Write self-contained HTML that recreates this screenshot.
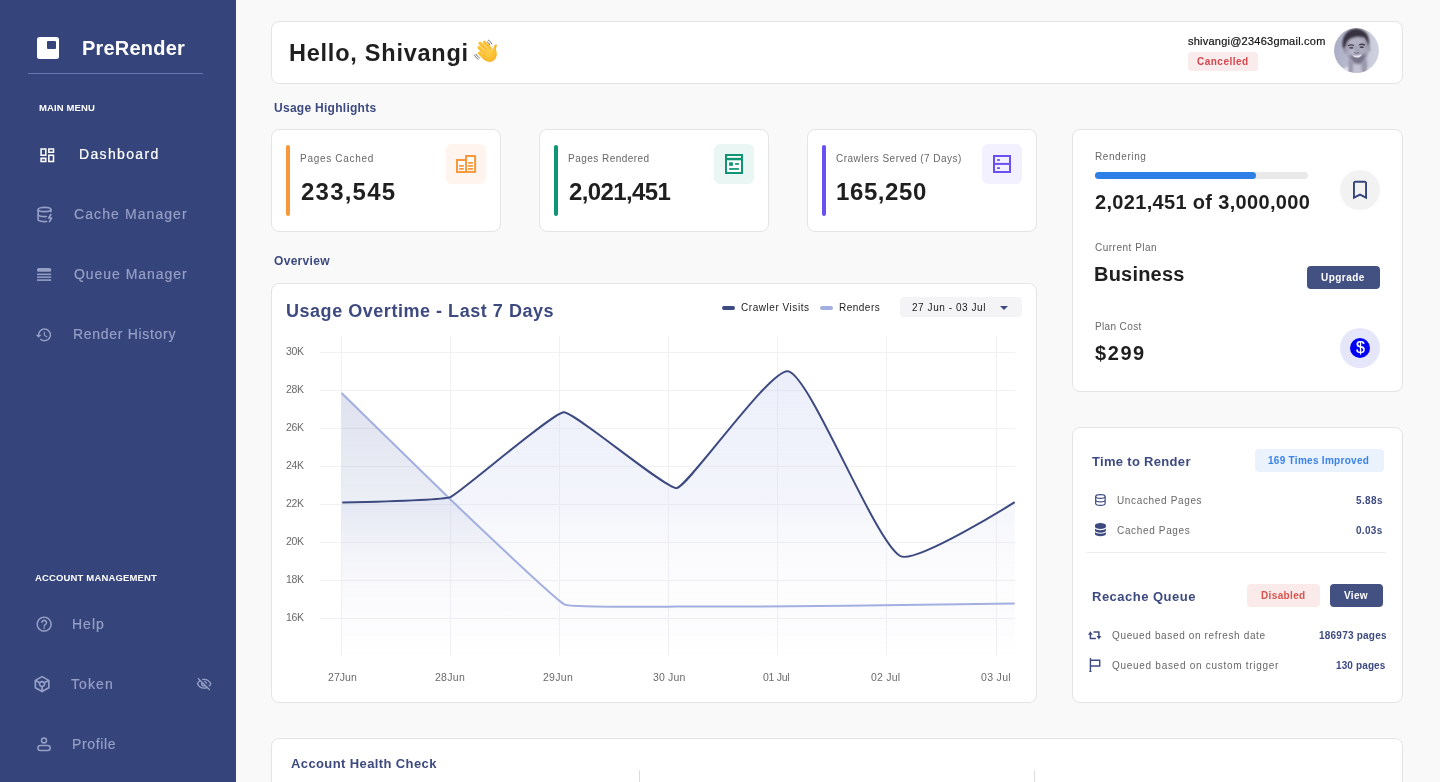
<!DOCTYPE html>
<html lang="en"><head><meta charset="utf-8"><title>PreRender Dashboard</title>
<style>
*{box-sizing:border-box;margin:0;padding:0}
html,body{width:1440px;height:782px;overflow:hidden}
body{position:relative;background:#f9f9f9;font-family:"Liberation Sans",sans-serif}
.t{position:absolute;white-space:pre;will-change:transform}
.abs{position:absolute}
.sidebar{position:absolute;left:0;top:0;width:236px;height:782px;background:#35447a}
.card{position:absolute;background:#fff;border:1px solid #e4e4e4;border-radius:8px}
svg{position:absolute;overflow:visible}

</style></head>
<body>
<!-- ============ SIDEBAR ============ -->
<div class="sidebar"></div>
<div class="abs" style="left:37px;top:37px;width:22px;height:22px;background:#fff;border-radius:2.5px"></div>
<div class="abs" style="left:47px;top:40.5px;width:9px;height:8.5px;background:#35447a;border-radius:1px"></div>
<div class="abs" style="left:28px;top:73px;width:175px;height:1px;background:#6576b4"></div>

<!-- dashboard icon -->
<svg style="left:37.600px;top:145.800px" width="18.600" height="18.600" viewBox="0 0 24 24" fill="#fff"><path d="M19 5v2h-4V5h4M9 5v6H5V5h4m10 8v6h-4v-6h4M9 17v2H5v-2h4M21 3h-8v6h8V3zM11 3H3v10h8V3zm10 8h-8v10h8V11zm-10 4H3v6h8v-6z"/></svg>
<!-- cache manager icon (database + bolt) -->
<svg style="left:35.600px;top:206.300px" width="17" height="17" viewBox="0 0 24 24" fill="none" stroke="#969fc5" stroke-width="2.300" stroke-linecap="round" stroke-linejoin="round"><ellipse cx="12" cy="5" rx="9" ry="3"/><path d="M3 5V19A9 3 0 0 0 15 21.84"/><path d="M21 5V8"/><path d="M21 12L18 17H22L19 22"/><path d="M3 12A9 3 0 0 0 14.59 14.87"/></svg>
<!-- queue manager icon -->
<svg style="left:37px;top:268px" width="14.2" height="13.2" viewBox="0 0 14.2 13.2" fill="#969fc5"><rect x="0" y="0" width="14.2" height="3.8" rx="1.6"/><rect x="0" y="5.6" width="14.2" height="1.5"/><rect x="0" y="8.4" width="14.2" height="1.5"/><rect x="0" y="11.3" width="14.2" height="1.6"/></svg>
<!-- render history icon -->
<svg style="left:35.4px;top:325.6px" width="17.6" height="17.6" viewBox="0 0 24 24" fill="#969fc5"><path d="M13 3c-4.97 0-9 4.03-9 9H1l3.89 3.89.07.14L9 12H6c0-3.87 3.13-7 7-7s7 3.130 7 7-3.13 7-7 7c-1.93 0-3.68-.79-4.94-2.06l-1.42 1.42C8.27 19.99 10.51 21 13 21c4.97 0 9-4.03 9-9s-4.03-9-9-9zm-1 5v5l4.280 2.540.72-1.210-3.500-2.080V8H12z"/></svg>
<!-- help icon -->
<svg style="left:34.9px;top:615.2px" width="18.4" height="18.4" viewBox="0 0 24 24" fill="#969fc5"><path d="M11 18h2v-2h-2v2zm1-16C6.48 2 2 6.48 2 12s4.48 10 10 10 10-4.48 10-10S17.52 2 12 2zm0 18c-4.41 0-8-3.590-8-8s3.590-8 8-8 8 3.590 8 8-3.590 8-8 8zm0-14c-2.210 0-4 1.790-4 4h2c0-1.100.9-2 2-2s2 .9 2 2c0 2-3 1.750-3 5h2c0-2.250 3-2.500 3-5 0-2.210-1.790-4-4-4z"/></svg>
<!-- token icon -->
<svg style="left:32.4px;top:674.3px" width="20.2" height="20.2" viewBox="0 0 24 24" fill="#969fc5"><path d="M21 7l-9-5-9 5v10l9 5 9-5V7zm-9-2.710l5.910 3.280-3.010 1.670C14.170 8.480 13.140 8 12 8s-2.170.48-2.900 1.240L6.090 7.570 12 4.290zM11 19.160l-6-3.330V9.260l3.130 1.740c-.09.31-.13.65-.13 1 0 1.860 1.270 3.430 3 3.870v3.290zM10 12c0-1.100.9-2 2-2s2 .9 2 2-.9 2-2 2-2-.9-2-2zm3 7.160v-3.280c1.730-.44 3-2.010 3-3.870 0-.35-.04-.69-.13-1.010L19 9.260v6.570l-6 3.330z"/></svg>
<!-- eye off -->
<svg style="left:196.3px;top:675.6px" width="16.2" height="16.2" viewBox="0 0 24 24" fill="#969fc5"><path d="M12 6c3.790 0 7.170 2.130 8.820 5.500-.59 1.220-1.420 2.270-2.410 3.120l1.410 1.410c1.390-1.230 2.490-2.770 3.180-4.530C21.270 7.110 17 4 12 4c-1.270 0-2.490.2-3.640.57l1.650 1.650C10.660 6.090 11.320 6 12 6zm-1.070 1.140L13 9.210c.57.25 1.030.71 1.280 1.280l2.070 2.070c.08-.34.14-.7.140-1.070C16.500 9.010 14.480 7 12 7c-.37 0-.72.05-1.070.14zM2.010 3.870l2.680 2.680C3.060 7.830 1.770 9.530 1 11.500 2.730 15.890 7 19 12 19c1.520 0 2.980-.29 4.320-.82l3.420 3.420 1.410-1.410L3.420 2.450 2.010 3.870zm7.500 7.500l2.610 2.610c-.4.010-.8.020-.12.020-1.380 0-2.500-1.120-2.500-2.500 0-.5.010-.8.010-.13zm-3.400-3.400l1.750 1.750c-.23.55-.36 1.150-.36 1.780 0 2.480 2.020 4.500 4.500 4.500.63 0 1.230-.13 1.770-.36l.98.98c-.88.24-1.800.38-2.750.38-3.790 0-7.170-2.130-8.820-5.500.7-1.430 1.720-2.610 2.930-3.530z"/></svg>
<!-- profile icon -->
<svg style="left:36px;top:736px" width="16" height="16" viewBox="0 0 16 16" fill="none" stroke="#969fc5" stroke-width="1.500"><circle cx="8" cy="4.400" r="2.500"/><rect x="1.900" y="9.400" width="12.300" height="5.100" rx="2.550"/></svg>

<!-- ============ HEADER CARD ============ -->
<div class="card" style="left:271px;top:21px;width:1132px;height:63px"></div>
<!-- waving hand -->
<svg style="left:474px;top:38.500px" width="24" height="24" viewBox="0 0 24 24">
  <defs><radialGradient id="hg" cx="0.42" cy="0.40" r="0.75"><stop offset="0" stop-color="#fdd14d"/><stop offset="0.65" stop-color="#fbbd2e"/><stop offset="1" stop-color="#ef9f1e"/></radialGradient></defs>
  <g stroke="#fbc133" stroke-width="3.200" stroke-linecap="round" fill="none">
    <path d="M10.300 3.300L16.600 9.600"/><path d="M6 4.300L13.400 11.700"/><path d="M5 8.700L11.400 15.100"/><path d="M5.400 14.100L10.400 19.100"/>
  </g>
  <path d="M17.700 11.600C18.900 10.200 19.300 8.600 20 7.100C20.800 5.600 22.300 5.100 22.800 5.900C23.200 6.600 22.300 7.700 22 9.300C21.700 11.100 22.800 12.600 22.800 15C22.800 19.400 19.700 22.900 15.600 22.900C12.400 22.900 10.400 21.100 8.400 19.100L9.500 13L15.600 8.400Z" fill="url(#hg)"/>
  <g stroke="#f5ae27" stroke-width="0.500" fill="none" opacity="0.8"><path d="M8.400 4.300L14.900 10.800"/><path d="M6 6.900L12.500 13.400"/><path d="M5.600 11.700L10.900 17"/></g>
  <g stroke="#4f4f4f" stroke-width="0.900" fill="none" stroke-linecap="round" opacity="0.85">
    <path d="M14.300 1q2.600 1.300 3.500 3.900"/><path d="M13.200 2.700q2 1 2.600 3.100"/>
    <path d="M0.400 16q1.100 2.800 3.700 4.300"/><path d="M2 15.200q1 2.300 3.400 3.700"/>
  </g>
</svg>
<!-- cancelled badge -->
<div class="abs" style="left:1188px;top:52px;width:69.5px;height:19px;background:#faebec;border-radius:3.5px"></div>
<!-- avatar -->
<svg style="left:1334px;top:28.200px" width="45" height="45" viewBox="0 0 45 45">
  <defs><clipPath id="avc"><circle cx="22.500" cy="22.500" r="22.400"/></clipPath>
  <linearGradient id="avbg" x1="0" x2="1" y1="0" y2="0"><stop offset="0" stop-color="#a9adc4"/><stop offset="0.5" stop-color="#c3c5d7"/><stop offset="1" stop-color="#cfd1df"/></linearGradient>
  <filter id="avb" x="-20%" y="-20%" width="140%" height="140%"><feGaussianBlur stdDeviation="0.900"/></filter>
  <filter id="avb2" x="-20%" y="-20%" width="140%" height="140%"><feGaussianBlur stdDeviation="0.500"/></filter></defs>
  <g clip-path="url(#avc)">
    <rect width="45" height="45" fill="url(#avbg)"/>
    <g filter="url(#avb)">
      <!-- shirt / shoulders -->
      <path d="M8 45q2-6 8-7l13 0q6 1 8 7z" fill="#eceaf2"/>
      <!-- neck -->
      <path d="M14.500 32h18.500l0.500 13h-19.500z" fill="#9a99ad"/>
      <path d="M19 36h8l1 9h-9z" fill="#c3c2d2"/>
      <!-- ears -->
      <ellipse cx="11.300" cy="22.500" rx="1.800" ry="2.800" fill="#8d8a9c"/><ellipse cx="34.800" cy="21" rx="1.800" ry="2.800" fill="#9d9aac"/>
      <!-- face -->
      <ellipse cx="23" cy="22" rx="11.400" ry="14.300" fill="#a6a4b7" transform="rotate(-6 23 22)"/>
      <ellipse cx="21.500" cy="13.500" rx="7" ry="4" fill="#b4b2c3"/>
      <ellipse cx="18" cy="24" rx="3.200" ry="3" fill="#b9b7c8"/><ellipse cx="28.500" cy="23" rx="3" ry="2.800" fill="#adabbd"/>
      <!-- stubble / lower face -->
      <path d="M15.500 26.500q8 5 16.300-1.500q-.5 8.500-7.500 11.500q-6.500-1.500-8.800-10z" fill="#777389"/>
      <!-- hair -->
      <path d="M9.200 21c-2.200-8 .5-15 6-18.500c5-3 11-2.500 14.500 .5c5 3 6.500 9 5 17c-1.200-3.500-2-8-5-10.500c-5-1-9-.5-12.500 1c-3 1.500-4.500 3.500-5 6.500c-.6 1.800-1.200 3-3 4z" fill="#37323f"/>
    </g>
    <g filter="url(#avb2)">
      <!-- brows + eyes -->
      <path d="M14 17.800q3-1.600 6-.3M25 17q3-1.600 6 .2" stroke="#443f4e" stroke-width="1.300" fill="none"/>
      <ellipse cx="17.300" cy="19.800" rx="2.100" ry="0.900" fill="#4a4556"/><ellipse cx="27.800" cy="19.200" rx="2.100" ry="0.900" fill="#4a4556"/>
      <!-- nose shadow -->
      <path d="M20 24.500q2.500 1.500 5 0" stroke="#6f6b80" stroke-width="1" fill="none"/>
      <!-- smile -->
      <path d="M18.300 26.900q4.800 1.600 9.600-.7q-1.400 3.400-4.800 3.400t-4.800-2.700z" fill="#e9e8f0"/>
    </g>
  </g>
</svg>
<!-- ============ STAT CARDS ============ -->
<div class="card" style="left:271px;top:129px;width:230px;height:103px"></div>
<div class="abs" style="left:286px;top:145px;width:4px;height:71px;border-radius:2px;background:#f8983a"></div>
<div class="abs" style="left:446px;top:144px;width:40px;height:40px;border-radius:6px;background:#fff5ee"></div>
<svg style="left:456px;top:155px" width="20.100" height="18" viewBox="0 0 20.100 18" fill="none" stroke="#f8983a"><path d="M10.100 4.900H1V16.900H10.100" stroke-width="2" fill="#fff"/><rect x="10.100" y="1" width="9" height="15.900" stroke-width="2" fill="#fff"/><path d="M3.100 10.900h4.700M3.100 13.900h4.700M12.100 7.900h4.800M12.100 10.900h4.800M12.100 13.900h4.800" stroke-width="1.600"/></svg>

<div class="card" style="left:539px;top:129px;width:230px;height:103px"></div>
<div class="abs" style="left:554px;top:145px;width:4px;height:71px;border-radius:2px;background:#0f9474"></div>
<div class="abs" style="left:714px;top:144px;width:40px;height:40px;border-radius:6px;background:#e9f6f3"></div>
<svg style="left:725px;top:154px" width="18" height="20" viewBox="0 0 18 20" fill="#0f9474" stroke="none"><rect x="1" y="1" width="16" height="18" fill="#fff" stroke="#0f9474" stroke-width="2"/><rect x="2" y="3.800" width="14" height="2.500"/><rect x="4.100" y="8.300" width="3.800" height="3.500"/><rect x="10.100" y="9.100" width="3.800" height="1.700"/><rect x="4.100" y="14.100" width="9.800" height="1.700"/></svg>

<div class="card" style="left:807px;top:129px;width:230px;height:103px"></div>
<div class="abs" style="left:822px;top:145px;width:4px;height:71px;border-radius:2px;background:#6a50f0"></div>
<div class="abs" style="left:982px;top:144px;width:40px;height:40px;border-radius:6px;background:#f3f1ff"></div>
<svg style="left:993px;top:155px" width="18" height="18" viewBox="0 0 18 18" fill="#6a50f0" stroke="none"><rect x="1" y="1" width="16" height="16" fill="none" stroke="#6a50f0" stroke-width="2"/><rect x="1" y="7.900" width="16" height="2"/><rect x="4.100" y="4.100" width="2.800" height="1.800"/><rect x="4.100" y="12.200" width="2.800" height="1.800"/></svg>

<!-- ============ RIGHT CARD 1 ============ -->
<div class="card" style="left:1072px;top:129px;width:331px;height:263px"></div>
<div class="abs" style="left:1095px;top:172px;width:213px;height:7px;border-radius:3.5px;background:#e9e9e9"></div>
<div class="abs" style="left:1095px;top:172px;width:161px;height:7px;border-radius:3.5px;background:#2f80e6"></div>
<div class="abs" style="left:1340px;top:170px;width:40px;height:40px;border-radius:20px;background:#f2f2f2"></div>
<svg style="left:1352px;top:179.600px" width="16" height="20" viewBox="0 0 16 20" fill="none" stroke="#35447a" stroke-width="1.900" stroke-linejoin="miter"><path d="M1.950 3.100a1.400 1.400 0 0 1 1.400-1.400h9.300a1.400 1.400 0 0 1 1.400 1.400v14.600l-6.050-3.100-6.050 3.100z"/></svg>
<div class="abs" style="left:1307px;top:266px;width:73px;height:23px;border-radius:4px;background:#435082"></div>
<div class="abs" style="left:1340px;top:328px;width:40px;height:40px;border-radius:20px;background:#e6e6fb"></div>
<div class="abs" style="left:1350px;top:338px;width:20px;height:20px;border-radius:10px;background:#0000f5"></div>
<div class="t" style="left:1355.550px;top:338.700px;font-size:16px;line-height:18px;font-weight:400;color:#fff;-webkit-text-stroke:0.2px">$</div>

<!-- ============ RIGHT CARD 2 ============ -->
<div class="card" style="left:1072px;top:427px;width:331px;height:276px"></div>
<div class="abs" style="left:1254.500px;top:449px;width:129px;height:23px;border-radius:4px;background:#eaf2fd"></div>
<!-- db outline -->
<svg style="left:1094.800px;top:494.100px" width="10.800" height="12" viewBox="0 0 11.400 12.800" preserveAspectRatio="none" fill="none" stroke="#3d4a80" stroke-width="1.250"><ellipse cx="5.700" cy="2.600" rx="5" ry="2"/><path d="M0.700 2.600v7.600c0 1.100 2.240 2 5 2s5-.9 5-2V2.600M0.700 6.400c0 1.100 2.240 2 5 2s5-.9 5-2"/></svg>
<!-- db filled -->
<svg style="left:1094.700px;top:523.400px" width="10.900" height="13.200" viewBox="0 0 11.400 13.400" preserveAspectRatio="none" fill="#3d4a80"><path d="M5.700 0C2.550 0 0 1 0 2.300v1.500c0 1.300 2.550 2.300 5.700 2.300s5.700-1 5.700-2.300V2.300C11.400 1 8.850 0 5.700 0z"/><path d="M0 5.600v1.900c0 1.300 2.550 2.300 5.700 2.300s5.700-1 5.700-2.300V5.600C10.600 6.700 8.300 7.300 5.700 7.300S.8 6.700 0 5.600z"/><path d="M0 9.200v1.900c0 1.300 2.550 2.300 5.700 2.300s5.700-1 5.700-2.300V9.200c-.8 1.100-3.100 1.700-5.700 1.700S.8 10.300 0 9.200z"/></svg>
<div class="abs" style="left:1087px;top:552px;width:299px;height:1px;background:#ececec"></div>
<div class="abs" style="left:1247px;top:584px;width:73px;height:23px;border-radius:4px;background:#fbeaea"></div>
<div class="abs" style="left:1330px;top:584px;width:53px;height:23px;border-radius:4px;background:#435082"></div>
<!-- repeat icon -->
<svg style="left:1088.400px;top:630.600px" width="13.400" height="8.600" viewBox="0 0 13.400 8.600" fill="#3d4a80" stroke="none"><path d="M0 3.700L2.400 0.200L4.800 3.700Z"/><path d="M2.400 3.200V7.600H7.900" fill="none" stroke="#3d4a80" stroke-width="1.500"/><path d="M8.500 4.900L10.900 8.400L13.300 4.900Z"/><path d="M5.500 1H10.900V5.400" fill="none" stroke="#3d4a80" stroke-width="1.500"/></svg>
<!-- flag icon -->
<svg style="left:1089px;top:658px" width="12" height="14" viewBox="0 0 12 14" fill="none" stroke="#3d4a80" stroke-width="1.400"><path d="M1.400 0.100V13.900"/><path d="M1.400 2.300H10.700V8H1.400"/><path d="M0.300 13.400h2.200" stroke-width="1"/></svg>
<!-- ============ CHART CARD ============ -->
<div class="card" style="left:271px;top:283px;width:766px;height:420px"></div>
<svg style="left:0;top:0" width="1440" height="782" viewBox="0 0 1440 782">
<defs>
<linearGradient id="gd" x1="0" y1="370" x2="0" y2="656" gradientUnits="userSpaceOnUse"><stop offset="0" stop-color="#c9d0f0" stop-opacity="0.36"/><stop offset="0.455" stop-color="#c9d0f0" stop-opacity="0.22"/><stop offset="0.6" stop-color="#d0d4ea" stop-opacity="0.13"/><stop offset="0.735" stop-color="#d6d8e6" stop-opacity="0.075"/><stop offset="0.875" stop-color="#d6d8e6" stop-opacity="0.03"/><stop offset="1" stop-color="#c9d0f0" stop-opacity="0"/></linearGradient>
<linearGradient id="gl" x1="0" y1="393" x2="0" y2="656" gradientUnits="userSpaceOnUse"><stop offset="0" stop-color="#6070b0" stop-opacity="0.2"/><stop offset="0.42" stop-color="#6070b0" stop-opacity="0.115"/><stop offset="0.6" stop-color="#6070b0" stop-opacity="0.05"/><stop offset="0.75" stop-color="#6070b0" stop-opacity="0.02"/><stop offset="1" stop-color="#6070b0" stop-opacity="0"/></linearGradient>
</defs>
<g stroke="#f1f1f4" stroke-width="1" shape-rendering="crispEdges">
<path d="M320 352.5H1015"/><path d="M320 390.5H1015"/><path d="M320 428.5H1015"/><path d="M320 466.5H1015"/><path d="M320 504.5H1015"/><path d="M320 542.5H1015"/><path d="M320 580.5H1015"/><path d="M320 618.5H1015"/>
<path d="M341.5 336V656"/><path d="M450.6 336V656"/><path d="M559.7 336V656"/><path d="M668.7 336V656"/><path d="M777.8 336V656"/><path d="M886.9 336V656"/><path d="M996.0 336V656"/>
</g>
<path d="M341.5 393.0 C349.2 400.6 444.2 493.6 452.0 501.0 C459.8 508.4 555.7 600.4 564.8 604.6 C571.5 607.7 670.2 606.5 678.1 606.6 C686.0 606.7 782.4 606.4 790.3 606.3 C798.2 606.2 894.6 605.1 902.5 605.0 C910.4 604.9 1006.8 603.7 1014.7 603.6 V656 H341.5 Z" fill="url(#gl)"/>
<path d="M342.3 502.6 C342.3 502.6 442.6 500.2 450.3 497.1 C460.3 493.0 552.2 412.8 563.8 412.3 C574.9 411.9 666.5 490.0 676.8 488.1 C689.0 485.9 771.4 366.2 788.6 371.4 C811.6 378.4 874.5 541.2 900.2 556.0 C915.2 564.7 1014.7 502.2 1014.7 502.2 V656 H341.5 Z" fill="url(#gd)"/>
<path d="M341.5 393.0 C349.2 400.6 444.2 493.6 452.0 501.0 C459.8 508.4 555.7 600.4 564.8 604.6 C571.5 607.7 670.2 606.5 678.1 606.6 C686.0 606.7 782.4 606.4 790.3 606.3 C798.2 606.2 894.6 605.1 902.5 605.0 C910.4 604.9 1006.8 603.7 1014.7 603.6" fill="none" stroke="#a3afe0" stroke-width="2" stroke-linecap="butt"/>
<path d="M342.3 502.6 C342.3 502.6 442.6 500.2 450.3 497.1 C460.3 493.0 552.2 412.8 563.8 412.3 C574.9 411.9 666.5 490.0 676.8 488.1 C689.0 485.9 771.4 366.2 788.6 371.4 C811.6 378.4 874.5 541.2 900.2 556.0 C915.2 564.7 1014.7 502.2 1014.7 502.2" fill="none" stroke="#3d4a80" stroke-width="2" stroke-linecap="butt"/>
</svg>
<div class="abs" style="left:721.700px;top:305.700px;width:13.300px;height:4px;border-radius:2px;background:#3d4a80"></div>
<div class="abs" style="left:820px;top:305.700px;width:13.300px;height:4px;border-radius:2px;background:#a3afe0"></div>
<div class="abs" style="left:900px;top:297px;width:122px;height:20px;border-radius:4px;background:#f4f4f6"></div>
<svg style="left:1000px;top:305.600px" width="8" height="4" viewBox="0 0 8 4"><path d="M0 0h8l-4 4z" fill="#3d4a80"/></svg>
<!-- ============ BOTTOM CARD ============ -->
<div class="card" style="left:271px;top:738px;width:1132px;height:80px"></div>
<div class="abs" style="left:639px;top:770px;width:1px;height:20px;background:#dcdcdc"></div>
<div class="abs" style="left:1034px;top:770px;width:1px;height:20px;background:#dcdcdc"></div>

<!-- text layer -->
<div class="t" style="left:81.50px;top:37px;font-size:20px;line-height:22px;font-weight:700;color:#ffffff;letter-spacing:0.204px;">PreRender</div>
<div class="t" style="left:39.20px;top:102px;font-size:9.5px;line-height:11px;font-weight:700;color:#ffffff;letter-spacing:0.109px;">MAIN MENU</div>
<div class="t" style="left:78.60px;top:146px;font-size:14px;line-height:16px;font-weight:400;color:#ffffff;letter-spacing:1.350px;-webkit-text-stroke:0.2px;">Dashboard</div>
<div class="t" style="left:73.50px;top:206px;font-size:14px;line-height:16px;font-weight:400;color:#969fc5;letter-spacing:1.087px;-webkit-text-stroke:0.2px;">Cache Manager</div>
<div class="t" style="left:73.50px;top:266px;font-size:14px;line-height:16px;font-weight:400;color:#969fc5;letter-spacing:0.957px;-webkit-text-stroke:0.2px;">Queue Manager</div>
<div class="t" style="left:72.50px;top:326px;font-size:14px;line-height:16px;font-weight:400;color:#969fc5;letter-spacing:0.695px;-webkit-text-stroke:0.2px;">Render History</div>
<div class="t" style="left:35.00px;top:572px;font-size:9.5px;line-height:11px;font-weight:700;color:#ffffff;letter-spacing:0.149px;">ACCOUNT MANAGEMENT</div>
<div class="t" style="left:72.30px;top:616px;font-size:14px;line-height:16px;font-weight:400;color:#969fc5;letter-spacing:0.998px;-webkit-text-stroke:0.2px;">Help</div>
<div class="t" style="left:70.50px;top:676px;font-size:14px;line-height:16px;font-weight:400;color:#969fc5;letter-spacing:1.107px;-webkit-text-stroke:0.2px;">Token</div>
<div class="t" style="left:72.30px;top:736px;font-size:14px;line-height:16px;font-weight:400;color:#969fc5;letter-spacing:0.634px;-webkit-text-stroke:0.2px;">Profile</div>
<div class="t" style="left:289.30px;top:40px;font-size:23.5px;line-height:26px;font-weight:700;color:#1f1f1f;letter-spacing:0.763px;">Hello, Shivangi</div>
<div class="t" style="left:1188.30px;top:35px;font-size:11px;line-height:12px;font-weight:400;color:#111;letter-spacing:0.233px;-webkit-text-stroke:0.2px;">shivangi@23463gmail.com</div>
<div class="t" style="left:1197.20px;top:56px;font-size:10px;line-height:11px;font-weight:700;color:#d4474c;letter-spacing:0.483px;">Cancelled</div>
<div class="t" style="left:274.40px;top:101px;font-size:12px;line-height:14px;font-weight:700;color:#3d4a80;letter-spacing:0.278px;">Usage Highlights</div>
<div class="t" style="left:274.20px;top:254px;font-size:12px;line-height:14px;font-weight:700;color:#3d4a80;letter-spacing:0.310px;">Overview</div>
<div class="t" style="left:300.20px;top:153px;font-size:10px;line-height:11px;font-weight:400;color:#676767;letter-spacing:0.706px;">Pages Cached</div>
<div class="t" style="left:300.60px;top:178px;font-size:24px;line-height:27px;font-weight:700;color:#1f1f1f;letter-spacing:1.216px;">233,545</div>
<div class="t" style="left:568.30px;top:153px;font-size:10px;line-height:11px;font-weight:400;color:#676767;letter-spacing:0.470px;">Pages Rendered</div>
<div class="t" style="left:568.70px;top:178px;font-size:24px;line-height:27px;font-weight:700;color:#1f1f1f;letter-spacing:-0.603px;">2,021,451</div>
<div class="t" style="left:836.20px;top:153px;font-size:10px;line-height:11px;font-weight:400;color:#676767;letter-spacing:0.472px;">Crawlers Served (7 Days)</div>
<div class="t" style="left:835.60px;top:178px;font-size:24px;line-height:27px;font-weight:700;color:#1f1f1f;letter-spacing:0.599px;">165,250</div>
<div class="t" style="left:1095.30px;top:151px;font-size:10px;line-height:11px;font-weight:400;color:#676767;letter-spacing:0.590px;">Rendering</div>
<div class="t" style="left:1095.30px;top:191px;font-size:20px;line-height:22px;font-weight:700;color:#1f1f1f;letter-spacing:0.328px;">2,021,451 of 3,000,000</div>
<div class="t" style="left:1095.30px;top:242px;font-size:10px;line-height:11px;font-weight:400;color:#676767;letter-spacing:0.502px;">Current Plan</div>
<div class="t" style="left:1094.30px;top:263px;font-size:20px;line-height:22px;font-weight:700;color:#1f1f1f;letter-spacing:0.200px;">Business</div>
<div class="t" style="left:1321.20px;top:272px;font-size:10px;line-height:11px;font-weight:700;color:#ffffff;letter-spacing:0.467px;">Upgrade</div>
<div class="t" style="left:1095.30px;top:321px;font-size:10px;line-height:11px;font-weight:400;color:#676767;letter-spacing:0.365px;">Plan Cost</div>
<div class="t" style="left:1095.30px;top:342px;font-size:20px;line-height:22px;font-weight:700;color:#1f1f1f;letter-spacing:1.577px;">$299</div>
<div class="t" style="left:1092.00px;top:454px;font-size:13px;line-height:15px;font-weight:700;color:#3d4a80;letter-spacing:0.313px;">Time to Render</div>
<div class="t" style="left:1267.90px;top:455px;font-size:10px;line-height:11px;font-weight:700;color:#3b82e8;letter-spacing:0.290px;">169 Times Improved</div>
<div class="t" style="left:1117.20px;top:495px;font-size:10px;line-height:11px;font-weight:400;color:#676767;letter-spacing:0.649px;">Uncached Pages</div>
<div class="t" style="left:1355.60px;top:495px;font-size:10px;line-height:11px;font-weight:700;color:#3d4a80;letter-spacing:0.384px;">5.88s</div>
<div class="t" style="left:1117.20px;top:525px;font-size:10px;line-height:11px;font-weight:400;color:#676767;letter-spacing:0.654px;">Cached Pages</div>
<div class="t" style="left:1356.20px;top:525px;font-size:10px;line-height:11px;font-weight:700;color:#3d4a80;letter-spacing:0.309px;">0.03s</div>
<div class="t" style="left:1092.40px;top:589px;font-size:13px;line-height:15px;font-weight:700;color:#3d4a80;letter-spacing:0.490px;">Recache Queue</div>
<div class="t" style="left:1261.30px;top:590px;font-size:10px;line-height:11px;font-weight:700;color:#d9534f;letter-spacing:0.361px;">Disabled</div>
<div class="t" style="left:1344.40px;top:590px;font-size:10px;line-height:11px;font-weight:700;color:#ffffff;letter-spacing:0.324px;">View</div>
<div class="t" style="left:1112.00px;top:630px;font-size:10px;line-height:11px;font-weight:400;color:#676767;letter-spacing:0.645px;">Queued based on refresh date</div>
<div class="t" style="left:1319.10px;top:630px;font-size:10px;line-height:11px;font-weight:700;color:#3d4a80;letter-spacing:0.228px;">186973 pages</div>
<div class="t" style="left:1112.00px;top:660px;font-size:10px;line-height:11px;font-weight:400;color:#676767;letter-spacing:0.713px;">Queued based on custom trigger</div>
<div class="t" style="left:1336.10px;top:660px;font-size:10px;line-height:11px;font-weight:700;color:#3d4a80;letter-spacing:0.125px;">130 pages</div>
<div class="t" style="left:285.90px;top:301px;font-size:18px;line-height:20px;font-weight:700;color:#3d4a80;letter-spacing:0.533px;">Usage Overtime - Last 7 Days</div>
<div class="t" style="left:741.00px;top:302px;font-size:10px;line-height:11px;font-weight:400;color:#222;letter-spacing:0.543px;">Crawler Visits</div>
<div class="t" style="left:839.30px;top:302px;font-size:10px;line-height:11px;font-weight:400;color:#222;letter-spacing:0.484px;">Renders</div>
<div class="t" style="left:912.00px;top:302px;font-size:10px;line-height:11px;font-weight:400;color:#222;letter-spacing:0.559px;">27 Jun - 03 Jul</div>
<div class="t" style="left:286.00px;top:345px;font-size:10.5px;line-height:12px;font-weight:400;color:#6a6a6a;letter-spacing:-0.340px;">30K</div>
<div class="t" style="left:286.00px;top:383px;font-size:10.5px;line-height:12px;font-weight:400;color:#6a6a6a;letter-spacing:-0.340px;">28K</div>
<div class="t" style="left:286.00px;top:421px;font-size:10.5px;line-height:12px;font-weight:400;color:#6a6a6a;letter-spacing:-0.340px;">26K</div>
<div class="t" style="left:286.00px;top:459px;font-size:10.5px;line-height:12px;font-weight:400;color:#6a6a6a;letter-spacing:-0.340px;">24K</div>
<div class="t" style="left:286.00px;top:497px;font-size:10.5px;line-height:12px;font-weight:400;color:#6a6a6a;letter-spacing:-0.340px;">22K</div>
<div class="t" style="left:286.00px;top:535px;font-size:10.5px;line-height:12px;font-weight:400;color:#6a6a6a;letter-spacing:-0.340px;">20K</div>
<div class="t" style="left:286.00px;top:573px;font-size:10.5px;line-height:12px;font-weight:400;color:#6a6a6a;letter-spacing:-0.340px;">18K</div>
<div class="t" style="left:286.00px;top:611px;font-size:10.5px;line-height:12px;font-weight:400;color:#6a6a6a;letter-spacing:-0.340px;">16K</div>
<div class="t" style="left:291.30px;top:756px;font-size:13px;line-height:15px;font-weight:700;color:#3d4a80;letter-spacing:0.392px;">Account Health Check</div>
<div class="t" style="left:328.20px;top:671px;font-size:10.5px;line-height:12px;font-weight:400;color:#6a6a6a;letter-spacing:0.058px;">27Jun</div>
<div class="t" style="left:435.10px;top:671px;font-size:10.5px;line-height:12px;font-weight:400;color:#6a6a6a;letter-spacing:0.283px;">28Jun</div>
<div class="t" style="left:542.90px;top:671px;font-size:10.5px;line-height:12px;font-weight:400;color:#6a6a6a;letter-spacing:0.283px;">29Jun</div>
<div class="t" style="left:653.10px;top:671px;font-size:10.5px;line-height:12px;font-weight:400;color:#6a6a6a;letter-spacing:0.163px;">30 Jun</div>
<div class="t" style="left:763.00px;top:671px;font-size:10.5px;line-height:12px;font-weight:400;color:#6a6a6a;letter-spacing:-0.277px;">01 Jul</div>
<div class="t" style="left:871.00px;top:671px;font-size:10.5px;line-height:12px;font-weight:400;color:#6a6a6a;letter-spacing:0.223px;">02 Jul</div>
<div class="t" style="left:981.00px;top:671px;font-size:10.5px;line-height:12px;font-weight:400;color:#6a6a6a;letter-spacing:0.323px;">03 Jul</div>
</body></html>
